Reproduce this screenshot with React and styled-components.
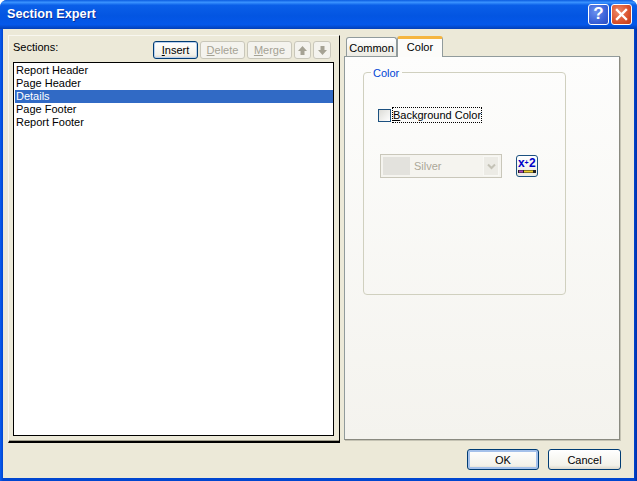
import { useState } from 'react';
import styled, { createGlobalStyle } from 'styled-components';

const GlobalStyle = createGlobalStyle`
  html, body {
    margin: 0;
    padding: 0;
    background: #fff;
  }
  * {
    box-sizing: border-box;
  }
  body {
    font-family: "Liberation Sans", "Noto Sans", sans-serif;
    font-size: 11px;
    color: #000;
  }
`;

const Window = styled.div`
  width: 637px;
  height: 481px;
  display: flex;
  flex-direction: column;
  border-radius: 7px 7px 0 0;
  background: linear-gradient(90deg, #0a5cf0 0, #0046d0 3px, #0046d0 634px, #0030a8 637px);
  overflow: hidden;
`;

const TitleBar = styled.div`
  height: 29px;
  flex: none;
  display: flex;
  align-items: center;
  justify-content: space-between;
  padding: 0 5px 1px 7px;
  background: linear-gradient(180deg, #0a5be0 0%, #3a93ff 8%, #0a5fe8 18%, #0355e2 55%, #0458ea 85%, #0340b8 100%);
`;

const Title = styled.span`
  font-size: 12.7px;
  font-weight: 700;
  color: #fff;
  text-shadow: 1px 1px 0 #0a2f9c;
`;

const Caption = styled.div`
  display: flex;
  gap: 2px;
`;

const CaptionButton = styled.div`
  width: 21px;
  height: 21px;
  border: 1px solid #fff;
  border-radius: 3px;
  display: flex;
  align-items: center;
  justify-content: center;
  color: #fff;
  font-size: 17px;
  font-weight: 700;
  background: ${p => (p.$close
    ? 'radial-gradient(circle at 35% 35%, #ee8a6a, #d9512c 60%, #c23a18)'
    : 'radial-gradient(circle at 35% 35%, #6b90ee, #3a62d8 60%, #2a4cc0)')};
`;

const Client = styled.div`
  flex: 1;
  display: flex;
  flex-direction: column;
  margin: 0 3px 3px 3px;
  padding: 6px 4px 0 5px;
  background: #ece9d8;
`;

const Panes = styled.div`
  display: flex;
  gap: 4px;
  height: 408px;
`;

const SectionPane = styled.div`
  width: 332px;
  height: 408px;
  padding: 5px 5px 5px 4px;
  border-style: solid;
  border-width: 1px 1px 2px 1px;
  border-color: #f8f7f0 #000 #000 #f8f7f0;
  display: flex;
  flex-direction: column;
  box-shadow: inset 0 -1px 0 #a09d8c;
`;

const SectionBar = styled.div`
  height: 21px;
  flex: none;
  display: flex;
  align-items: flex-start;
  justify-content: space-between;
`;

const SectionLabel = styled.span`
  line-height: 13px;
`;

const SectionTools = styled.div`
  display: flex;
  gap: 2px;
  margin-right: 3px;
`;

const ToolButton = styled.button`
  height: 18px;
  width: ${p => p.$w}px;
  padding: 0;
  font: inherit;
  color: ${p => (p.disabled ? '#a5a294' : '#000')};
  border: 1px solid ${p => (p.disabled ? '#c9c7ba' : '#003c74')};
  border-radius: 3px;
  background: ${p => (p.disabled ? '#f4f3ee' : 'linear-gradient(180deg, #fff, #f2f1ea 80%, #dcd8cc)')};
  box-shadow: ${p => (p.$focus ? 'inset 0 0 0 1px #b9d0ee' : 'none')};
  display: flex;
  align-items: center;
  justify-content: center;
`;

const SectionList = styled.ul`
  flex: 1;
  margin: 0;
  padding: 1px 0 1px 1px;
  list-style: none;
  background: #fff;
  border: 1px solid #000;
`;

const SectionItem = styled.li`
  height: 13px;
  line-height: 13px;
  padding-left: 1px;
  white-space: nowrap;
  color: ${p => (p.$selected ? '#fff' : '#000')};
  background: ${p => (p.$selected ? '#316ac5' : 'transparent')};
`;

const TabPane = styled.div`
  width: 276px;
  display: flex;
  flex-direction: column;
`;

const TabStrip = styled.div`
  height: 21px;
  flex: none;
  display: flex;
  align-items: flex-end;
  padding-left: 2px;
`;

const Tab = styled.div`
  height: ${p => (p.$active ? 21 : 19)}px;
  width: ${p => (p.$active ? 46 : 51)}px;
  padding-top: ${p => (p.$active ? 2 : 4)}px;
  margin-bottom: ${p => (p.$active ? -1 : 0)}px;
  text-align: center;
  border: 1px solid #919b9c;
  border-bottom: none;
  border-radius: 3px 3px 0 0;
  background: ${p => (p.$active ? '#fcfcfa' : 'linear-gradient(180deg, #fff, #ecebe3)')};
  border-top: ${p => (p.$active ? '3px solid #f5b53f' : '1px solid #919b9c')};
  position: relative;
  z-index: ${p => (p.$active ? 1 : 0)};
`;

const TabPage = styled.div`
  flex: 1;
  margin-bottom: 3px;
  padding: 8px 0 0 18px;
  border: 1px solid #919b9c;
  border-right-color: #8a8a80;
  border-bottom-color: #8a8a80;
  box-shadow: 1px 1px 0 #c5c3b4;
  background: linear-gradient(180deg, #fdfdfc 0%, #f4f3ee 100%);
`;

const ColorGroup = styled.fieldset`
  width: 203px;
  height: 230px;
  margin: 0;
  padding: 0 0 0 14px;
  border: 1px solid #d0d0bf;
  border-radius: 4px;
`;

const GroupLegend = styled.legend`
  margin-left: -7px;
  padding: 2px 3px 0 2px;
  color: #0046d5;
  line-height: 13px;
`;

const CheckRow = styled.label`
  display: flex;
  align-items: center;
  gap: 2px;
  margin-top: 28px;
`;

const CheckBox = styled.span`
  width: 13px;
  height: 13px;
  flex: none;
  border: 1px solid #1c5180;
  background: linear-gradient(135deg, #dcdcd7, #fff);
`;

const CheckLabel = styled.span`
  height: 14px;
  line-height: 15px;
  outline: 1px dotted #000;
  white-space: nowrap;
`;

const ColorRow = styled.div`
  display: flex;
  align-items: center;
  gap: 14px;
  margin: 32px 0 0 2px;
`;

const ColorSelect = styled.div`
  width: 122px;
  height: 24px;
  display: flex;
  align-items: center;
  padding: 2px;
  border: 1px solid #c9c7ba;
  background: #f5f4ef;
`;

const Swatch = styled.span`
  width: 27px;
  height: 18px;
  flex: none;
  margin-right: 4px;
  background: #e3e2dd;
`;

const SelectText = styled.span`
  flex: 1;
  color: #aca899;
`;

const SelectArrow = styled.span`
  width: 16px;
  height: 20px;
  flex: none;
  display: flex;
  align-items: center;
  justify-content: center;
  background: #ecebe5;
  border: 1px solid #f8f8f4;
`;

const FormulaButton = styled.div`
  width: 22px;
  height: 22px;
  padding: 1px;
  border: 1px solid #1c5180;
  border-radius: 3px;
  background: linear-gradient(180deg, #fff, #ecebe3);
  display: flex;
`;

const Footer = styled.div`
  flex: 1;
  display: flex;
  justify-content: flex-end;
  gap: 9px;
  padding: 6px 9px 0 0;
`;

const DialogButton = styled.button`
  width: ${p => p.$w}px;
  height: 21px;
  padding: 0;
  font: inherit;
  color: #000;
  border: 1px solid #003c74;
  border-radius: 3px;
  background: linear-gradient(180deg, #fff, #f3f2ea 80%, #dcd8cc);
  box-shadow: ${p => (p.$focus ? 'inset 0 0 0 2px #a5c1ea' : 'none')};
`;

const Mnemonic = styled.span`
  text-decoration: underline;
`;

const sections = ['Report Header', 'Page Header', 'Details', 'Page Footer', 'Report Footer'];

const ArrowIcon = ({ down }) => (
  <svg width="11" height="11" viewBox="0 0 11 11" style={down ? { transform: 'rotate(180deg)' } : undefined}>
    <path d="M5.5 1 10 6H7.5v4h-4V6H1z" fill="#a5a294" />
  </svg>
);

const FormulaIcon = () => (
  <svg width="18" height="18" viewBox="0 0 18 18">
    <text x="0" y="10" fontSize="12" fontWeight="700" fill="#0000c8">x</text>
    <text x="6.4" y="7.5" fontSize="7" fontWeight="700" fill="#0000c8">+</text>
    <text x="11" y="10" fontSize="12" fontWeight="700" fill="#0000c8">2</text>
    <rect x="0" y="13" width="18" height="3" fill="#222" />
    <rect x="1" y="13.5" width="4" height="2" fill="#b040c0" />
    <rect x="6" y="13.5" width="9" height="2" fill="#f0d030" />
  </svg>
);

const App = () => {
  const [selected, setSelected] = useState('Details');

  return (
    <>
      <GlobalStyle />
      <Window>
        <TitleBar>
          <Title>Section Expert</Title>
          <Caption>
            <CaptionButton>?</CaptionButton>
            <CaptionButton $close>
              <svg width="13" height="13" viewBox="0 0 13 13">
                <path d="M2 2l9 9M11 2l-9 9" stroke="#fff" strokeWidth="2.4" strokeLinecap="square" />
              </svg>
            </CaptionButton>
          </Caption>
        </TitleBar>
        <Client>
          <Panes>
            <SectionPane>
              <SectionBar>
                <SectionLabel>Sections:</SectionLabel>
                <SectionTools>
                  <ToolButton $w={45} $focus><span><Mnemonic>I</Mnemonic>nsert</span></ToolButton>
                  <ToolButton $w={45} disabled><span><Mnemonic>D</Mnemonic>elete</span></ToolButton>
                  <ToolButton $w={45} disabled><span><Mnemonic>M</Mnemonic>erge</span></ToolButton>
                  <ToolButton $w={17} disabled><ArrowIcon /></ToolButton>
                  <ToolButton $w={18} disabled><ArrowIcon down /></ToolButton>
                </SectionTools>
              </SectionBar>
              <SectionList>
                {sections.map(name => (
                  <SectionItem key={name} $selected={name === selected} onClick={() => setSelected(name)}>
                    {name}
                  </SectionItem>
                ))}
              </SectionList>
            </SectionPane>
            <TabPane>
              <TabStrip>
                <Tab>Common</Tab>
                <Tab $active>Color</Tab>
              </TabStrip>
              <TabPage>
                <ColorGroup>
                  <GroupLegend>Color</GroupLegend>
                  <CheckRow>
                    <CheckBox />
                    <CheckLabel><Mnemonic>B</Mnemonic>ackground Color</CheckLabel>
                  </CheckRow>
                  <ColorRow>
                    <ColorSelect>
                      <Swatch />
                      <SelectText>Silver</SelectText>
                      <SelectArrow>
                        <svg width="9" height="7" viewBox="0 0 9 7">
                          <path d="M1 1.5l3.5 3.5L8 1.5" fill="none" stroke="#c4c2b6" strokeWidth="2" />
                        </svg>
                      </SelectArrow>
                    </ColorSelect>
                    <FormulaButton><FormulaIcon /></FormulaButton>
                  </ColorRow>
                </ColorGroup>
              </TabPage>
            </TabPane>
          </Panes>
          <Footer>
            <DialogButton $w={72} $focus>OK</DialogButton>
            <DialogButton $w={73}>Cancel</DialogButton>
          </Footer>
        </Client>
      </Window>
    </>
  );
};

export default App;
